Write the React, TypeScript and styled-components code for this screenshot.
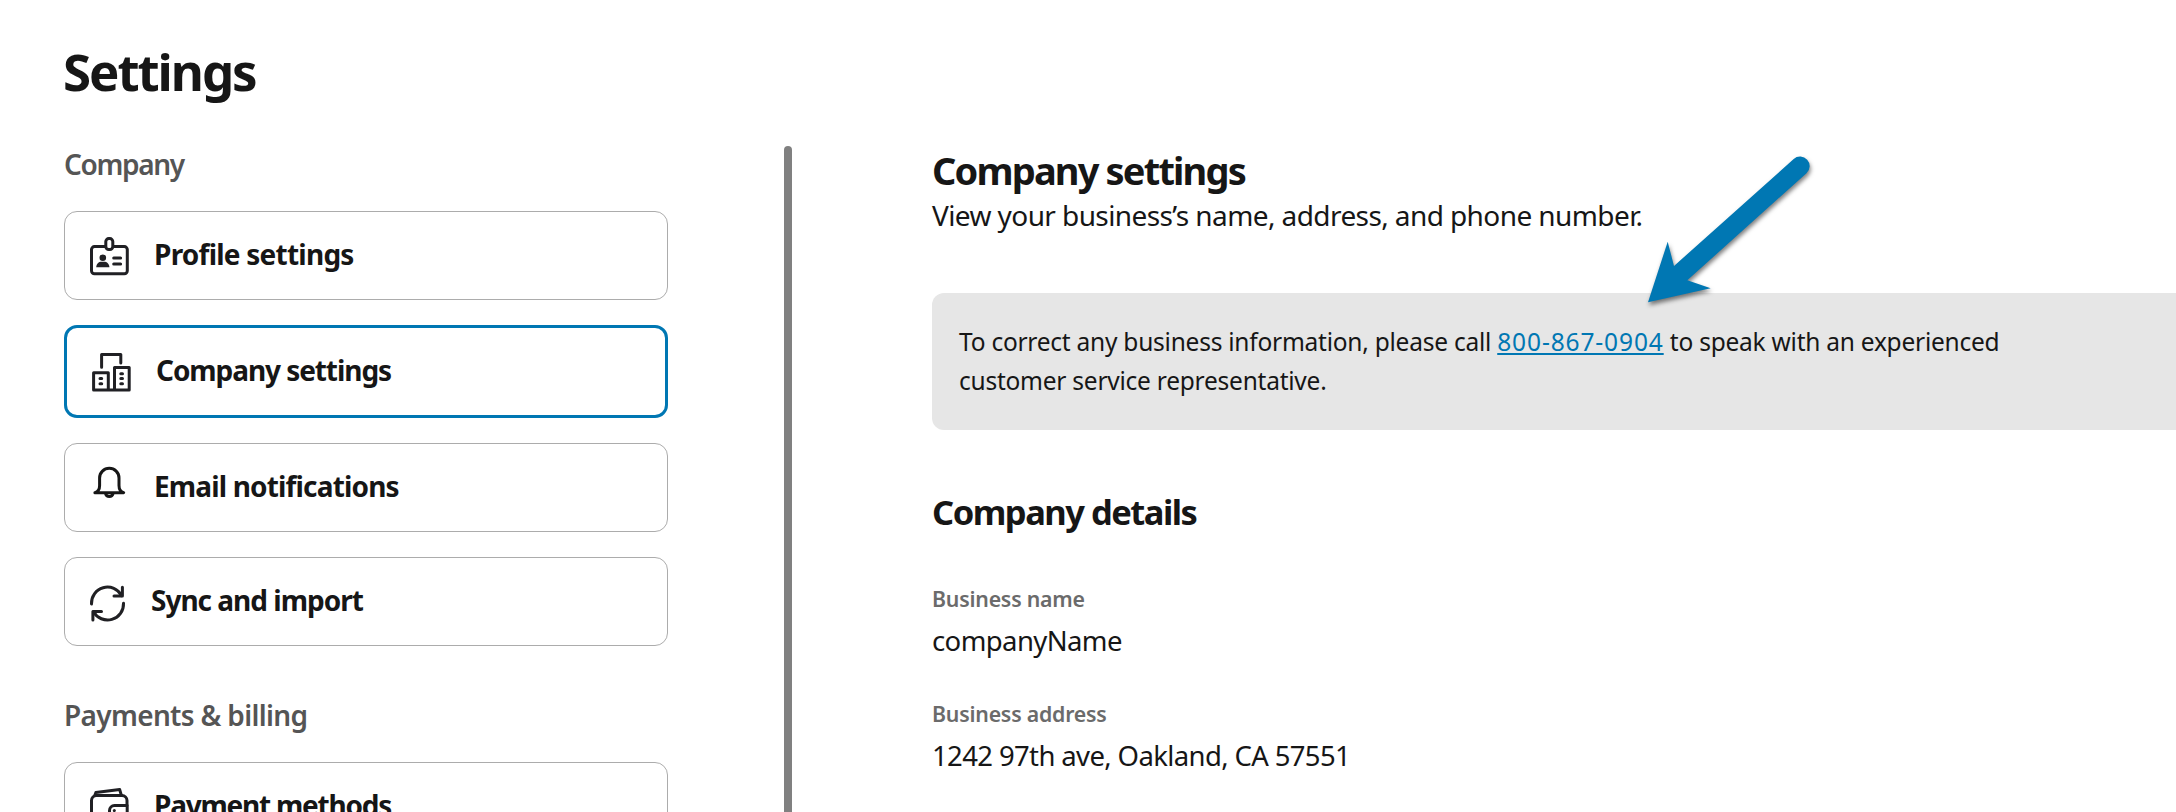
import React from 'react';
import styled, { createGlobalStyle } from 'styled-components';

const GlobalStyle = createGlobalStyle`
  * { box-sizing: border-box; }
  html, body { margin: 0; background: #fff; overflow: hidden; }
`;

const Page = styled.div`
  position: relative;
  display: flex;
  flex-direction: column;
  gap: 43px;
  height: 812px;
  padding: 41px 0 0 64px;
  overflow: hidden;
  background: #fff;
  color: #161616;
  font-family: 'Noto Sans', 'Open Sans', sans-serif;
`;

const PageTitle = styled.h1`
  margin: 0 0 0 -1px;
  font-size: 51px;
  line-height: 60px;
  font-weight: 700;
  letter-spacing: -2.05px;
`;

const Columns = styled.div`
  display: flex;
  flex: 1;
  min-height: 0;
`;

const Sidebar = styled.nav`
  display: flex;
  flex-direction: column;
  flex: none;
  gap: 49px;
  width: 604px;
`;

const NavGroup = styled.section`
  display: flex;
  flex-direction: column;
  flex: none;
`;

const GroupLabel = styled.h2<{ $tracking: number }>`
  margin: 0 0 27px;
  color: #555;
  font-size: 28px;
  line-height: 40px;
  font-weight: 600;
  letter-spacing: ${(p) => p.$tracking}px;
`;

const NavList = styled.div`
  display: flex;
  flex-direction: column;
  gap: 25px;
`;

const NavCard = styled.a<{ $active?: boolean }>`
  display: flex;
  align-items: center;
  gap: 25px;
  height: ${(p) => (p.$active ? 93 : 89)}px;
  padding: 0 25px;
  border: ${(p) => (p.$active ? '3px solid #0077b3' : '1px solid #acacac')};
  border-radius: 13px;
  color: inherit;
  text-decoration: none;

  svg {
    flex: none;
    margin-top: 2px;
    overflow: visible;
  }
`;

const NavText = styled.span<{ $tracking: number }>`
  padding-bottom: 3px;
  font-size: 28px;
  line-height: 38px;
  font-weight: 700;
  letter-spacing: ${(p) => p.$tracking}px;
`;

const ScrollThumb = styled.div`
  flex: none;
  width: 8px;
  margin: 2px 140px 0 116px;
  border-radius: 4px 4px 0 0;
  background: #808080;
`;

const Main = styled.main`
  flex: 1;
  min-width: 0;
  padding-top: 2px;
`;

const SectionTitle = styled.h2`
  margin: 0;
  font-size: 38px;
  line-height: 48px;
  font-weight: 700;
  letter-spacing: -1.83px;
`;

const Intro = styled.p`
  margin: 1px 0 58px;
  font-size: 28px;
  line-height: 40px;
  letter-spacing: -0.59px;
`;

const Notice = styled.div`
  height: 137px;
  padding: 29px 27px;
  border-radius: 12px 0 0 12px;
  background: #e6e6e6;
`;

const NoticeText = styled.p`
  max-width: 1080px;
  margin: 0;
  font-size: 24.5px;
  line-height: 39px;
  letter-spacing: -0.24px;
`;

const PhoneLink = styled.a`
  color: #0077b3;
  letter-spacing: 0.88px;
  text-decoration: underline;
  text-decoration-thickness: 2px;
  text-underline-offset: 2px;
  text-decoration-skip-ink: none;
`;

const DetailsTitle = styled.h3`
  margin: 60px 0 50px;
  font-size: 34.5px;
  line-height: 44px;
  font-weight: 700;
  letter-spacing: -1.5px;
`;

const Details = styled.dl`
  display: flex;
  flex-direction: column;
  gap: 39px;
  margin: 0;
`;

const Field = styled.div`
  display: flex;
  flex-direction: column;
  gap: 8px;
`;

const FieldLabel = styled.dt`
  color: #6b6b6b;
  font-size: 21.3px;
  line-height: 30px;
  font-weight: 600;
  letter-spacing: -0.22px;
`;

const FieldValue = styled.dd<{ $tracking: number }>`
  margin: 0;
  font-size: 27.5px;
  line-height: 38px;
  letter-spacing: ${(p) => p.$tracking}px;
`;

const Pointer = styled.svg`
  position: absolute;
  left: 1640px;
  top: 146px;
  filter: drop-shadow(1px 3px 2px rgba(0, 0, 0, 0.5));
`;

const stroke = {
  fill: 'none',
  stroke: '#202024',
  strokeWidth: 3,
  strokeLinecap: 'round' as const,
  strokeLinejoin: 'round' as const,
};

const BadgeIcon = () => (
  <svg width="39" height="39" viewBox="0 0 39 39" {...stroke}>
    <rect x="1.5" y="9.6" width="35.8" height="27.2" rx="3" />
    <rect x="15.8" y="1.6" width="7" height="11" rx="3" fill="#fff" />
    <circle cx="12.8" cy="20.8" r="3.3" fill="#202024" stroke="none" />
    <path d="M6.2 30.3c.2-3.6 2.4-5.6 5.4-5.6h2.4c3 0 5.2 2 5.4 5.6z" fill="#202024" stroke="none" />
    <path d="M23.7 20.9h6.9M23.7 27.1h6.9" />
  </svg>
);

const BuildingsIcon = () => (
  <svg width="39" height="39" viewBox="0 0 39 39" {...stroke}>
    <path d="M9.6 14.2V1.6h19.2v8.4" />
    <path d="M1.6 37.1V19.7h14.7v17.4M22.5 37.1V14.6h14.7v22.5M1.6 37.1h35.6" />
    <path d="M8 25.6h1.7M8 30.7h1.7M28.8 20.8h1.7M28.8 25.6h1.7M28.8 30.7h1.7" />
  </svg>
);

const BellIcon = () => (
  <svg width="39" height="46" viewBox="0 0 39 46" {...stroke} stroke="#161616">
    <path d="M4.9 26.7C8.4 25.7 9.6 23.6 9.6 19.5V12a9.7 9.7 0 0 1 19.4 0v7.5c0 4.1 1.2 6.2 4.7 7.2z" />
    <path d="M15.6 27.6a3.8 3.7 0 0 0 7.4 0" />
  </svg>
);

const SyncIcon = () => (
  <svg width="36" height="37" viewBox="0 -2 36 37" {...stroke}>
    <path d="M1.5 18A16 16 0 0 1 31.6 9.6" />
    <path d="M32.4 1.2V9.9H24" />
    <path d="M33.5 17.2A16 16 0 0 1 3.5 25.7" />
    <path d="M2.9 34V25.5H11.5" />
  </svg>
);

const WalletIcon = () => (
  <svg width="39" height="39" viewBox="0 0 39 39" {...stroke}>
    <path d="M37 17v-4.5a5 5 0 0 0-5-5H6.5a5 5 0 0 0-5 5V32a5 5 0 0 0 5 5H32a5 5 0 0 0 5-5" />
    <path d="M5 7l.8-2.4L29.7 1.6l1.6 5.6" />
    <path d="M24.5 17.5h12.7V29H24.5a5 5 0 0 1-5-5v-1.5a5 5 0 0 1 5-5z" />
    <circle cx="24.3" cy="22.6" r="1.5" fill="#202024" stroke="none" />
  </svg>
);

export default function App() {
  return (
    <Page>
      <GlobalStyle />
      <PageTitle>Settings</PageTitle>
      <Columns>
        <Sidebar>
          <NavGroup>
            <GroupLabel $tracking={-1.35}>Company</GroupLabel>
            <NavList>
              <NavCard>
                <BadgeIcon />
                <NavText $tracking={-0.76}>Profile settings</NavText>
              </NavCard>
              <NavCard $active>
                <BuildingsIcon />
                <NavText $tracking={-1.07}>Company settings</NavText>
              </NavCard>
              <NavCard>
                <BellIcon />
                <NavText $tracking={-0.84}>Email notifications</NavText>
              </NavCard>
              <NavCard>
                <SyncIcon />
                <NavText $tracking={-1}>Sync and import</NavText>
              </NavCard>
            </NavList>
          </NavGroup>
          <NavGroup>
            <GroupLabel $tracking={-0.66}>Payments &amp; billing</GroupLabel>
            <NavList>
              <NavCard>
                <WalletIcon />
                <NavText $tracking={-1.22}>Payment methods</NavText>
              </NavCard>
            </NavList>
          </NavGroup>
        </Sidebar>
        <ScrollThumb />
        <Main>
          <SectionTitle>Company settings</SectionTitle>
          <Intro>View your business’s name, address, and phone number.</Intro>
          <Notice>
            <NoticeText>
              To correct any business information, please call <PhoneLink>800-867-0904</PhoneLink> to speak with an
              experienced customer service representative.
            </NoticeText>
          </Notice>
          <DetailsTitle>Company details</DetailsTitle>
          <Details>
            <Field>
              <FieldLabel>Business name</FieldLabel>
              <FieldValue $tracking={-0.6}>companyName</FieldValue>
            </Field>
            <Field>
              <FieldLabel>Business address</FieldLabel>
              <FieldValue $tracking={-0.63}>1242 97th ave, Oakland, CA 57551</FieldValue>
            </Field>
          </Details>
        </Main>
      </Columns>
      <Pointer width="180" height="165" viewBox="1640 146 180 165" fill="#0077b3">
        <path d="M1648 302.3L1667.7 241.7L1674 266L1793.7 159A9.5 9.5 0 0 1 1806.5 173.2L1687.3 280.3L1710.7 288.3Z" />
      </Pointer>
    </Page>
  );
}
